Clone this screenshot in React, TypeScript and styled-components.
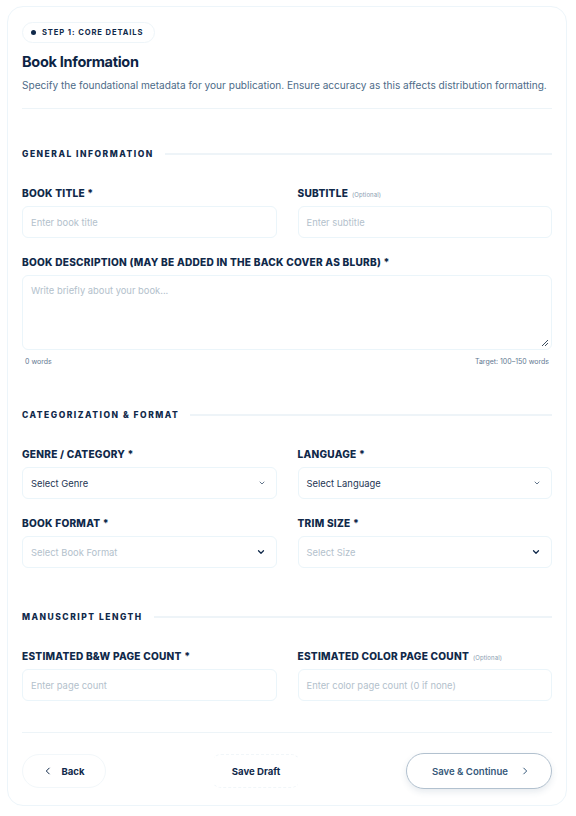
import { createGlobalStyle, styled } from "styled-components";

const GlobalStyle = createGlobalStyle`
  * { box-sizing: border-box; }
  body {
    margin: 0;
    background: #ffffff;
    font-family: "Inter", "Noto Sans", sans-serif;
    color: #0f2742;
  }
`;

const Page = styled.div`
  width: 576px;
  padding: 6px 9px 11px 7px;
`;

const Card = styled.div`
  border: 1px solid #edf5fa;
  border-radius: 16px;
  padding: 15px 14px 16px 14px;
  background: #fff;
`;

const StepPill = styled.div`
  display: flex;
  width: fit-content;
  align-items: center;
  gap: 6px;
  height: 21px;
  padding: 0 11px 0 8px;
  border: 1px solid #eef5f9;
  border-radius: 999px;
  font-size: 7.6px;
  font-weight: 700;
  letter-spacing: 0.9px;
  color: #10294a;
  &::before {
    content: "";
    width: 5px;
    height: 5px;
    border-radius: 50%;
    background: #10294a;
  }
`;

const Title = styled.h1`
  margin: 10px 0 0;
  font-size: 14.5px;
  line-height: 18px;
  font-weight: 700;
  letter-spacing: -0.3px;
  color: #0c2444;
`;

const Lead = styled.p`
  margin: 8px 0 0;
  font-size: 10.1px;
  line-height: 12px;
  color: #4d6b88;
  white-space: nowrap;
`;

const Divider = styled.hr`
  border: 0;
  border-top: 1px solid #edf4f8;
  margin: 17px 0 0;
`;

const Section = styled.section`
  margin-top: 44px;
  &:first-of-type {
    margin-top: 40px;
  }
`;

const SectionHead = styled.div`
  display: flex;
  align-items: center;
  gap: 11px;
  font-size: 8.5px;
  line-height: 10px;
  font-weight: 800;
  letter-spacing: 1.5px;
  color: #10294a;
  &::after {
    content: "";
    flex: 1;
    height: 2px;
    background: #eef4f8;
  }
`;

const Grid = styled.div`
  display: grid;
  grid-template-columns: 1fr 1fr;
  column-gap: 21px;
  row-gap: 18px;
  margin-top: 28px;
`;

const Field = styled.div<{ $wide?: boolean }>`
  display: flex;
  flex-direction: column;
  gap: 7px;
  grid-column: ${(p) => (p.$wide ? "1 / -1" : "auto")};
`;

const Label = styled.label`
  display: block;
  height: 12px;
  font-size: 10.1px;
  font-weight: 800;
  letter-spacing: 0.25px;
  color: #10294a;
  white-space: nowrap;
  line-height: 12px;
`;

const Optional = styled.span`
  margin-left: 4px;
  font-size: 6px;
  line-height: 0;
  font-weight: 400;
  letter-spacing: 0.1px;
  color: #8a9db0;
`;

const Box = styled.div<{ $tall?: boolean; $filled?: boolean }>`
  position: relative;
  display: flex;
  align-items: ${(p) => (p.$tall ? "flex-start" : "center")};
  justify-content: space-between;
  height: ${(p) => (p.$tall ? "75px" : "32px")};
  padding: ${(p) => (p.$tall ? "9px 8px" : "0 10px 0 8px")};
  border: 1px solid #ebf5fa;
  border-radius: 6px;
  font-size: 9.4px;
  color: ${(p) => (p.$filled ? "#1d3553" : "#b3c1cc")};
`;

const Grip = styled.svg`
  position: absolute;
  right: 2px;
  bottom: 2px;
`;

const Counter = styled.div`
  display: flex;
  justify-content: space-between;
  padding: 0 3px;
  font-size: 7px;
  color: #5f7891;
`;

const Footer = styled.div`
  display: flex;
  align-items: center;
  justify-content: space-between;
  margin-top: 31px;
  padding-top: 20px;
  border-top: 1px solid #edf4f8;
`;

const BackBtn = styled.button`
  display: flex;
  align-items: center;
  gap: 8px;
  height: 34px;
  width: 84px;
  justify-content: center;
  padding: 0;
  border: 1px solid #f2f7fa;
  border-radius: 999px;
  background: #fff;
  font-family: inherit;
  font-size: 9.6px;
  font-weight: 700;
  color: #10294a;
`;

const DraftBtn = styled.button`
  height: 34px;
  padding: 0 20px;
  border: 1px dashed #f1f6f9;
  border-left-color: transparent;
  border-right-color: transparent;
  border-radius: 10px;
  background: #fff;
  font-family: inherit;
  font-size: 9.6px;
  font-weight: 700;
  color: #10294a;
`;

const NextBtn = styled.button`
  display: flex;
  align-items: center;
  gap: 12px;
  height: 36px;
  width: 146px;
  justify-content: center;
  padding: 0 0 0 4px;
  border: 1px solid #b2c1cf;
  border-radius: 999px;
  background: #fff;
  box-shadow: 0 3px 6px rgba(60, 90, 120, 0.12);
  font-family: inherit;
  font-size: 9.6px;
  font-weight: 600;
  color: #36597a;
`;

const Chevron = ({ bold }: { bold?: boolean }) => (
  <svg width={bold ? 10 : 8} height={bold ? 10 : 8} viewBox="0 0 24 24" fill="none">
    <path
      d="M6 9l6 6 6-6"
      stroke={bold ? "#10294a" : "#3d5670"}
      strokeWidth={bold ? 3 : 2.4}
      strokeLinecap="round"
      strokeLinejoin="round"
    />
  </svg>
);

const Arrow = ({ dir, color }: { dir: "left" | "right"; color: string }) => (
  <svg width="10" height="10" viewBox="0 0 24 24" fill="none">
    <path
      d={dir === "left" ? "M15 5l-7 7 7 7" : "M9 5l7 7-7 7"}
      stroke={color}
      strokeWidth="2.4"
      strokeLinecap="round"
      strokeLinejoin="round"
    />
  </svg>
);

const App = () => {
  return (
    <Page>
      <GlobalStyle />
      <Card>
        <StepPill>STEP 1: CORE DETAILS</StepPill>
        <Title>Book Information</Title>
        <Lead>
          Specify the foundational metadata for your publication. Ensure accuracy as this affects
          distribution formatting.
        </Lead>
        <Divider />

        <Section>
          <SectionHead>GENERAL INFORMATION</SectionHead>
          <Grid>
            <Field>
              <Label>BOOK TITLE *</Label>
              <Box>Enter book title</Box>
            </Field>
            <Field>
              <Label>
                SUBTITLE<Optional>(Optional)</Optional>
              </Label>
              <Box>Enter subtitle</Box>
            </Field>
            <Field $wide>
              <Label>BOOK DESCRIPTION (MAY BE ADDED IN THE BACK COVER AS BLURB) *</Label>
              <Box $tall>
                Write briefly about your book...
                <Grip width="9" height="9" viewBox="0 0 9 9">
                  <path d="M8 2L2 8M8 5L5 8" stroke="#3d4f60" strokeWidth="1" />
                </Grip>
              </Box>
              <Counter>
                <span>0 words</span>
                <span>Target: 100–150 words</span>
              </Counter>
            </Field>
          </Grid>
        </Section>

        <Section>
          <SectionHead>CATEGORIZATION &amp; FORMAT</SectionHead>
          <Grid>
            <Field>
              <Label>GENRE / CATEGORY *</Label>
              <Box $filled>
                Select Genre
                <Chevron />
              </Box>
            </Field>
            <Field>
              <Label>LANGUAGE *</Label>
              <Box $filled>
                Select Language
                <Chevron />
              </Box>
            </Field>
            <Field>
              <Label>BOOK FORMAT *</Label>
              <Box>
                Select Book Format
                <Chevron bold />
              </Box>
            </Field>
            <Field>
              <Label>TRIM SIZE *</Label>
              <Box>
                Select Size
                <Chevron bold />
              </Box>
            </Field>
          </Grid>
        </Section>

        <Section>
          <SectionHead>MANUSCRIPT LENGTH</SectionHead>
          <Grid>
            <Field>
              <Label>ESTIMATED B&amp;W PAGE COUNT *</Label>
              <Box>Enter page count</Box>
            </Field>
            <Field>
              <Label>
                ESTIMATED COLOR PAGE COUNT<Optional>(Optional)</Optional>
              </Label>
              <Box>Enter color page count (0 if none)</Box>
            </Field>
          </Grid>
        </Section>

        <Footer>
          <BackBtn>
            <Arrow dir="left" color="#10294a" />
            Back
          </BackBtn>
          <DraftBtn>Save Draft</DraftBtn>
          <NextBtn>
            Save &amp; Continue
            <Arrow dir="right" color="#36597a" />
          </NextBtn>
        </Footer>
      </Card>
    </Page>
  );
};

export default App;
